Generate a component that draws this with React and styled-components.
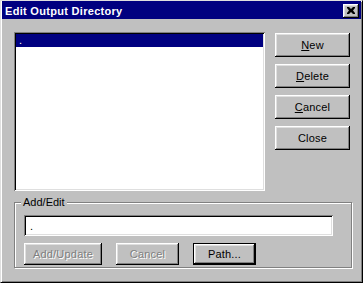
import React from 'react'
import styled, { createGlobalStyle, css } from 'styled-components'

const GlobalStyle = createGlobalStyle`
    html, body {
        margin: 0;
        padding: 0;
        background: #c0c0c0;
    }
    body {
        font-family: "Liberation Sans", Arial, sans-serif;
        font-size: 11px;
    }
`

const raised = css`
    box-shadow: inset -1px -1px #000, inset 1px 1px #fff, inset -2px -2px #808080, inset 2px 2px #dfdfdf;
`
const sunken = css`
    box-shadow: inset 1px 1px #808080, inset -1px -1px #fff, inset 2px 2px #000, inset -2px -2px #dfdfdf;
`

const Window = styled.div`
    width: 363px;
    height: 283px;
    box-sizing: border-box;
    background: #c0c0c0;
    border-top: 1px solid #dfdfdf;
    border-left: 1px solid #dfdfdf;
    border-right: 1px solid #000;
    border-bottom: 1px solid #000;
    box-shadow: inset 1px 1px #fff, inset -1px -1px #808080;
    padding: 0 1px 1px 1px;
    display: flex;
    flex-direction: column;
`
const TitleBar = styled.div`
    height: 18px;
    flex: none;
    background: #000080;
    color: #fff;
    font-weight: bold;
    font-size: 11px;
    letter-spacing: 0.3px;
    display: flex;
    align-items: center;
    justify-content: space-between;
    padding: 0 2px 0 3px;
`
const TitleText = styled.span`
    padding-top: 1px;
`
const CloseBox = styled.div`
    width: 16px;
    height: 14px;
    background: #c0c0c0;
    ${raised}
    display: flex;
    align-items: center;
    justify-content: center;
    margin-top: 1px;
`
const Body = styled.div`
    padding: 13px 0 0 12px;
    display: flex;
    flex-direction: column;
`
const TopRow = styled.div`
    display: flex;
`
const ListBox = styled.div`
    width: 251px;
    height: 159px;
    box-sizing: border-box;
    background: #fff;
    padding: 2px;
    ${sunken}
`
const ListRow = styled.div`
    height: 13px;
    line-height: 12px;
    padding-left: 3px;
    background: ${p => p.$selected ? '#000080' : 'transparent'};
    color: ${p => p.$selected ? '#fff' : '#000'};
`
const ButtonColumn = styled.div`
    margin-left: 10px;
    padding-top: 1px;
    display: flex;
    flex-direction: column;
    gap: 7px;
`
const Button = styled.button`
    width: ${p => p.$w || 75}px;
    height: ${p => p.$h || 24}px;
    box-sizing: border-box;
    padding: 0;
    border: none;
    background: #c0c0c0;
    font-family: "Liberation Sans", Arial, sans-serif;
    font-size: 11px;
    letter-spacing: 0.2px;
    color: #000;
    ${raised}
    ${p => p.$default && css`
        border: 1px solid #000;
        box-shadow: inset -1px -1px #000, inset 1px 1px #fff, inset -2px -2px #808080, inset 2px 2px #dfdfdf;
    `}
    ${p => p.disabled && css`
        color: #808080;
        text-shadow: 1px 1px #fff;
    `}
    u {
        text-decoration: underline;
        text-underline-offset: 1px;
    }
`
const GroupBox = styled.div`
    position: relative;
    margin-top: 11px;
    width: 338px;
    height: 66px;
    box-sizing: border-box;
    border: 1px solid #808080;
    box-shadow: 1px 1px 0 #fff, inset 1px 1px 0 #fff;
    padding: 12px 0 0 9px;
`
const GroupLabel = styled.span`
    position: absolute;
    top: -7px;
    left: 6px;
    padding: 0 2px;
    line-height: 13px;
    background: #c0c0c0;
    color: #000;
`
const TextField = styled.input`
    display: block;
    width: 309px;
    height: 21px;
    box-sizing: border-box;
    border: none;
    outline: none;
    background: #fff;
    padding: 0 0 0 6px;
    font-family: "Liberation Sans", Arial, sans-serif;
    font-size: 11px;
    color: #000;
    ${sunken}
`
const ButtonRow = styled.div`
    margin-top: 7px;
    display: flex;
    gap: 14px;
`

const CloseIcon = () => (
    <svg width="8" height="7" viewBox="0 0 8 7">
        <path d="M0 0h2l2 2 2-2h2v1L6 3.5 8 6v1H6L4 5 2 7H0V6l2-2.5L0 1z" fill="#000" />
    </svg>
)

const App = () => {
    return (
        <>
            <GlobalStyle />
            <Window>
                <TitleBar>
                    <TitleText>Edit Output Directory</TitleText>
                    <CloseBox><CloseIcon /></CloseBox>
                </TitleBar>
                <Body>
                    <TopRow>
                        <ListBox>
                            <ListRow $selected>.</ListRow>
                        </ListBox>
                        <ButtonColumn>
                            <Button><u>N</u>ew</Button>
                            <Button><u>D</u>elete</Button>
                            <Button><u>C</u>ancel</Button>
                            <Button>Close</Button>
                        </ButtonColumn>
                    </TopRow>
                    <GroupBox>
                        <GroupLabel>Add/Edit</GroupLabel>
                        <TextField readOnly value="." />
                        <ButtonRow>
                            <Button $w={78} $h={22} disabled>Add/Update</Button>
                            <Button $w={63} $h={22} disabled>Cancel</Button>
                            <Button $w={63} $h={22} $default>Path...</Button>
                        </ButtonRow>
                    </GroupBox>
                </Body>
            </Window>
        </>
    )
}

export default App
